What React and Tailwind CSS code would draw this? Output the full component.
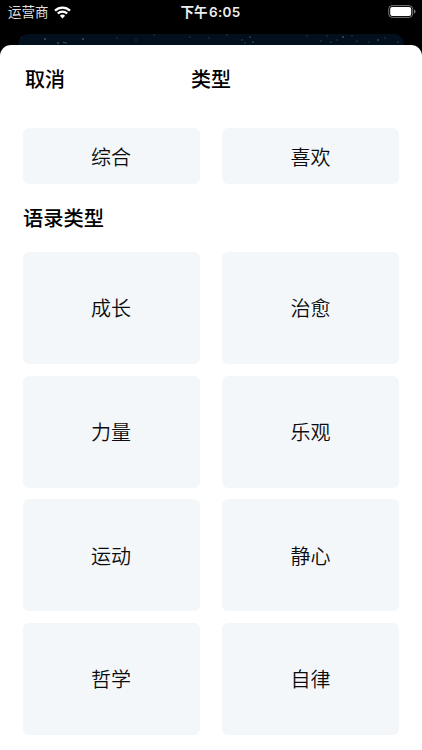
const topCards = ['综合', '喜欢']
const quoteTypes = ['成长', '治愈', '力量', '乐观', '运动', '静心', '哲学', '自律']

// x, y, opacity
const stars = [
  [3, 3, 0.4], [27, 5, 0.8], [40, 9, 0.7], [46, 8.5, 0.6], [48, 9, 0.5], [65, 5, 0.8], [99, 4, 0.3],
  [118, 6, 0.3], [136, 1, 0.3], [172, 3, 0.3], [191, 4, 0.3], [209, 1, 0.3], [224, 6, 0.4], [227, 9, 0.4],
  [232, 3, 0.5], [235, 8, 0.5], [289, 2, 0.3], [303, 7, 0.4], [309, 2, 0.3], [313, 8, 0.4], [319, 6, 0.3],
  [325, 3, 0.8], [334, 2, 0.3], [339, 7, 0.3], [351, 8, 0.3], [360, 6, 0.7], [367, 4, 0.3], [380, 8, 0.4],
]

function App() {
  return (
    <div className="relative h-[750px] w-[422px] overflow-hidden bg-black font-['Inter','Noto_Sans_CJK_SC',sans-serif] text-black">
      {/* Status bar */}
      <header className="grid h-[34px] grid-cols-3 items-start pt-[3px] pr-1.5 pl-2 text-[13.5px] leading-[18px] text-white">
        <div className="flex items-center gap-[5px]">
          <span className="text-[#ddd]">运营商</span>
          <svg className="h-[13px] w-[17px]" viewBox="0 0 17 13" fill="none" stroke="currentColor" strokeWidth="2.3">
            <path d="M1 4.6a10.8 10.8 0 0 1 15 0M3.8 7.5a6.7 6.7 0 0 1 9.4 0" />
            <path d="M8.5 12.4 5.9 9.8a3.7 3.7 0 0 1 5.2 0z" fill="currentColor" stroke="none" />
          </svg>
        </div>
        <div className="pr-[3px] text-center font-semibold text-[#eee]">
          下午<span className="ml-[1.5px] tracking-[0.3px]">6:05</span>
        </div>
        <div className="flex justify-end pt-0.5">
          <svg className="h-[13px] w-7" viewBox="0 0 28 13">
            <rect x=".7" y=".6" width="24" height="11.8" rx="3.5" fill="none" stroke="#777" />
            <rect x="2.2" y="2" width="21" height="9" rx="2" fill="white" />
            <path d="M26 4.4v4.2c1-.4 1.6-1.2 1.6-2.1S27 4.8 26 4.4z" fill="#777" />
          </svg>
        </div>
      </header>

      {/* Page behind the sheet */}
      <div className="mx-[18px] h-[11px] overflow-hidden rounded-t-[10px] bg-[#020f1c]">
        <svg className="h-[11px] w-[386px]" viewBox="0 0 386 11">
          {stars.map(([x, y, opacity]) => (
            <circle key={x} cx={x} cy={y} r=".7" fill="#9fc0d8" opacity={opacity} />
          ))}
        </svg>
      </div>

      {/* Sheet */}
      <main className="h-[705px] rounded-t-[11px] bg-white px-[23px] pt-[21px]">
        <div className="grid grid-cols-3 text-[20px] leading-[28px] font-medium">
          <button className="pl-0.5 text-left">取消</button>
          <h1 className="text-center">类型</h1>
        </div>
        <div className="mt-[34.4px] grid grid-cols-2 gap-x-[22px]">
          {topCards.map((name) => (
            <button key={name} className="h-14 rounded-md bg-[#f3f7fa] pt-1 text-[20px] font-[350] text-[#0c0c0e] odd:pr-px">{name}</button>
          ))}
        </div>
        <h2 className="mt-[20.6px] text-[20.3px] leading-[28px] font-medium">语录类型</h2>
        <div className="mt-[19px] grid grid-cols-2 gap-x-[22px] gap-y-[11.6px]">
          {quoteTypes.map((name) => (
            <button key={name} className="h-28 rounded-md bg-[#f3f7fa] pt-[3px] text-[20px] font-[350] text-[#0c0c0e] odd:pr-px">{name}</button>
          ))}
        </div>
      </main>
    </div>
  )
}

export default App
